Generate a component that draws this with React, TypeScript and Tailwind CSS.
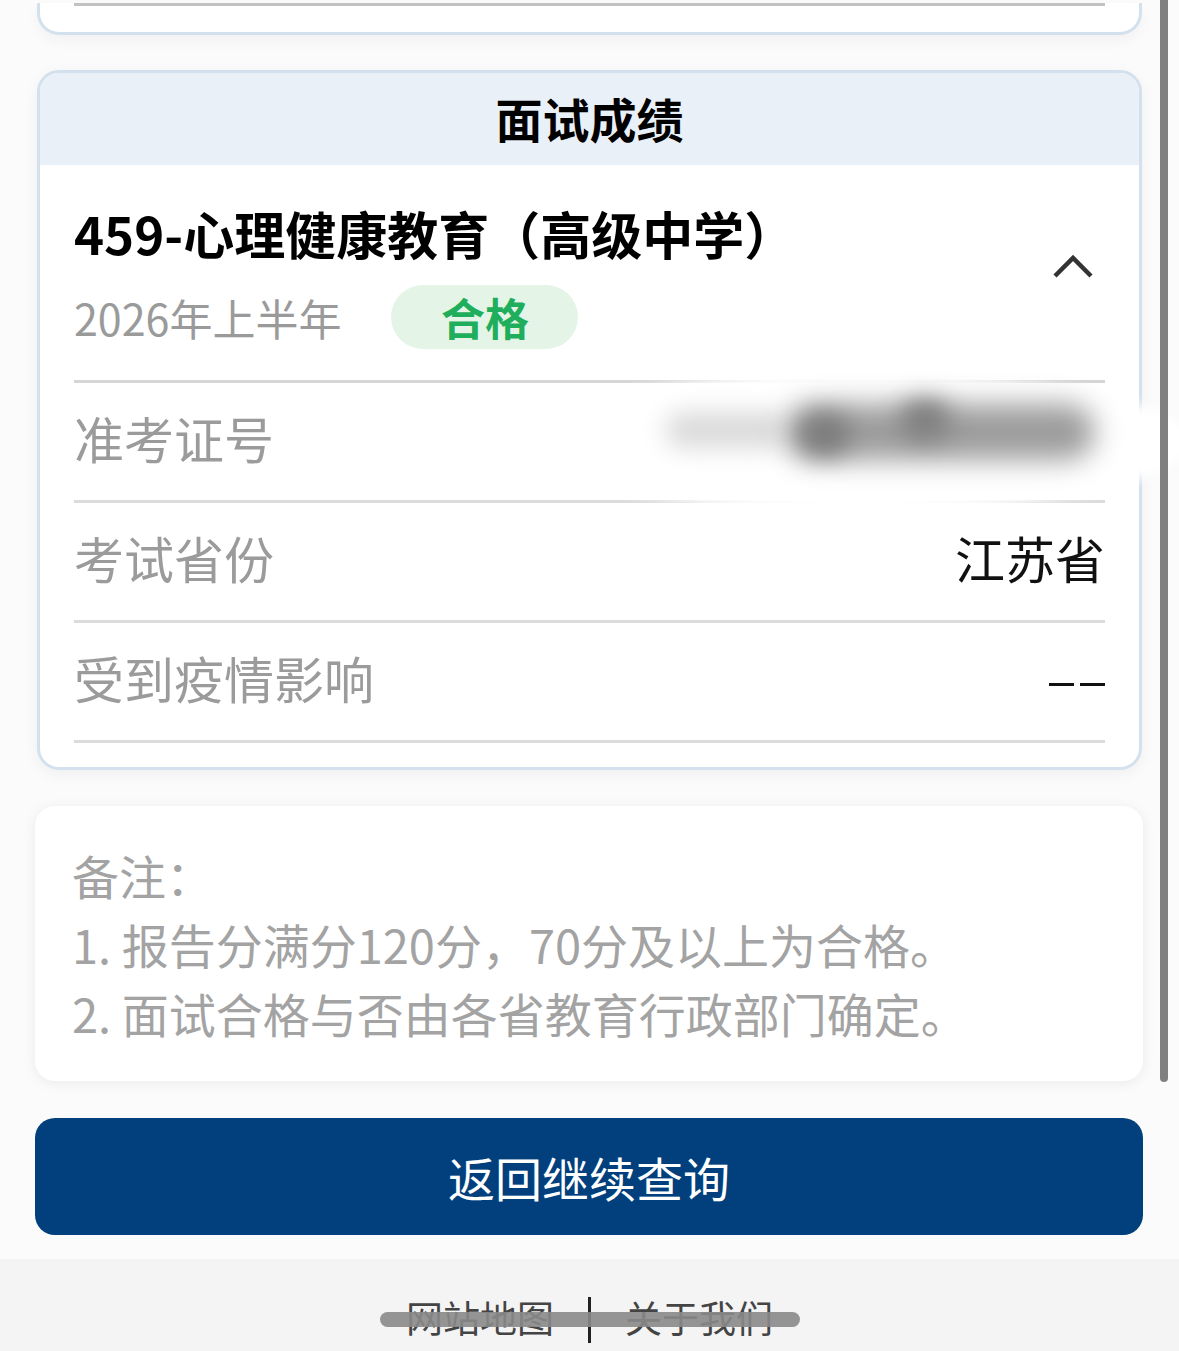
const font = "font-['PingFang_SC','Noto_Sans_CJK_SC','Noto_Sans',sans-serif]"

const Row = ({ label, value }: { label: string; value: string }) => {
    return (
        <div className="flex h-[120px] items-center justify-between border-b-[3px] border-[#dcdcdc] pb-[9px]">
            <span className="text-[50px] leading-none text-[#9b9b9b]">{label}</span>
            <span className="text-[50px] leading-none text-[#111]">{value}</span>
        </div>
    )
}

const App = () => {
    return (
        <div className={"relative h-[1351px] w-[1179px] overflow-hidden bg-[#fbfbfb] " + font}>
            {/* previous card, scrolled away */}
            <div className="ml-[37px] mr-[37px] h-[32px] rounded-b-[22px] border-[3px] border-t-0 border-[#d3e1ee] bg-white px-[34px] shadow-[0_6px_14px_rgba(0,0,0,0.04)]">
                <div className="mt-[3px] h-[3px] bg-[#c2c2c2]" />
            </div>

            {/* result card */}
            <div className="ml-[37px] mr-[37px] mt-[35px] overflow-hidden rounded-[22px] border-[3px] border-[#d3e1ee] bg-white shadow-[0_4px_16px_rgba(0,0,0,0.05)]">
                <div className="flex h-[92px] items-center justify-center bg-[#eaf0f8]">
                    <span className="mt-[-4px] text-[47px] font-bold leading-none text-black">面试成绩</span>
                </div>
                <div className="px-[34px] pb-[24px]">
                    <div className="flex items-center justify-between border-b-[3px] border-[#d6d6d6] pb-[31px] pt-[43px]">
                        <div className="flex flex-col">
                            <span className="text-[51px] font-bold leading-none text-black">459-心理健康教育（高级中学）</span>
                            <div className="mt-[26px] flex items-center gap-[50px]">
                                <span className="text-[43px] leading-none text-[#9a9a9a]">2026年上半年</span>
                                <span className="flex h-[64px] w-[187px] items-center justify-center rounded-full bg-[#e4f5e8] text-[44px] font-bold leading-none text-[#1fae5c]">合格</span>
                            </div>
                        </div>
                        <svg width="44" height="30" viewBox="0 0 44 30" className="mr-[10px] mt-[-26px]">
                            <path d="M4 25 L22 7 L40 25" fill="none" stroke="#333" strokeWidth="4.5" />
                        </svg>
                    </div>
                    <Row label="准考证号" value="" />
                    <Row label="考试省份" value="江苏省" />
                    <div className="flex h-[120px] items-center justify-between border-b-[3px] border-[#dcdcdc] pb-[9px]">
                        <span className="text-[50px] leading-none text-[#9b9b9b]">受到疫情影响</span>
                        <span className="flex gap-[6px] pt-[14px]" aria-label="--">
                            <span className="h-[3px] w-[25px] bg-[#111]" />
                            <span className="h-[3px] w-[25px] bg-[#111]" />
                        </span>
                    </div>
                </div>
            </div>

            {/* notes */}
            <div className="ml-[35px] mr-[36px] mt-[36px] rounded-[20px] bg-white px-[37px] pb-[34px] pt-[34px] shadow-[0_2px_14px_rgba(0,0,0,0.07)]">
                <p className="text-[47px] leading-[69px] text-[#a3a3a3]">备注：</p>
                <p className="text-[47px] leading-[69px] text-[#a3a3a3]">1. 报告分满分120分，70分及以上为合格。</p>
                <p className="text-[47px] leading-[69px] text-[#a3a3a3]">2. 面试合格与否由各省教育行政部门确定。</p>
            </div>

            <button className="ml-[35px] mt-[37px] flex h-[117px] w-[1108px] items-center justify-center rounded-[20px] bg-[#013f7d] text-[47px] leading-none text-white">
                返回继续查询
            </button>

            <div className="mt-[24px] h-[120px] bg-white">
                <div className="flex h-full items-start justify-center rounded-b-[30px] bg-[#f4f4f4] pt-[40px] text-[37px] leading-none text-[#444]">
                    <span>网站地图</span>
                    <span className="mx-[34px] mt-[-2px] h-[46px] w-[3px] bg-[#222]" />
                    <span>关于我们</span>
                </div>
            </div>

            {/* redaction smear over the ticket number */}
            <div className="absolute left-[530px] top-[372px] h-[140px] w-[660px] rounded-[50%] bg-white blur-[6px]" />
            <div className="absolute left-[665px] top-[412px] h-[36px] w-[120px] rounded-full bg-[#dadada] blur-[12px]" />
            <div className="absolute left-[785px] top-[404px] h-[56px] w-[310px] rounded-full bg-[#9c9c9c] blur-[14px]" />
            <div className="absolute left-[800px] top-[414px] h-[40px] w-[50px] rounded-full bg-[#7a7a7a] blur-[12px]" />
            <div className="absolute left-[900px] top-[400px] h-[40px] w-[50px] rounded-full bg-[#7e7e7e] blur-[12px]" />

            {/* scrollbar */}
            <div className="absolute left-[1160px] top-0 h-[1082px] w-[8px] rounded-b-full bg-[#808080]" />

            {/* home indicator */}
            <div className="absolute left-[380px] top-[1312px] h-[15px] w-[420px] rounded-full bg-[#8a8a8a] opacity-90" />
        </div>
    )
}

export default App
